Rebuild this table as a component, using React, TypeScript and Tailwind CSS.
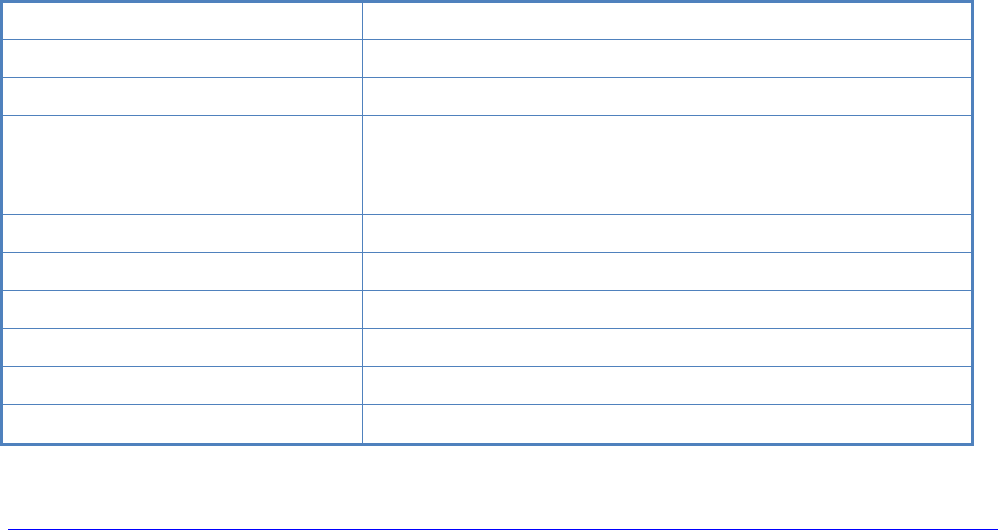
const rows = [37, 37, 37, 98, 37, 37, 37, 37, 37, 37];

const App = () => {
  return (
    <div className="bg-white w-[998px] h-[531px] font-['Liberation_Sans',sans-serif]">
      <div className="w-[974px] border-[3px] border-[#4f81bd] divide-y divide-[#4f81bd]">
        {rows.map((h, i) => (
          <div key={i} className="flex" style={{ height: h + (i > 0 ? 1 : 0) }}>
            <div className="w-[360px] border-r border-[#4f81bd]" />
            <div className="flex-1" />
          </div>
        ))}
      </div>
      <div className="mt-[83px] ml-[8px] border-t border-[#0000ff]" />
    </div>
  );
};

export default App;
